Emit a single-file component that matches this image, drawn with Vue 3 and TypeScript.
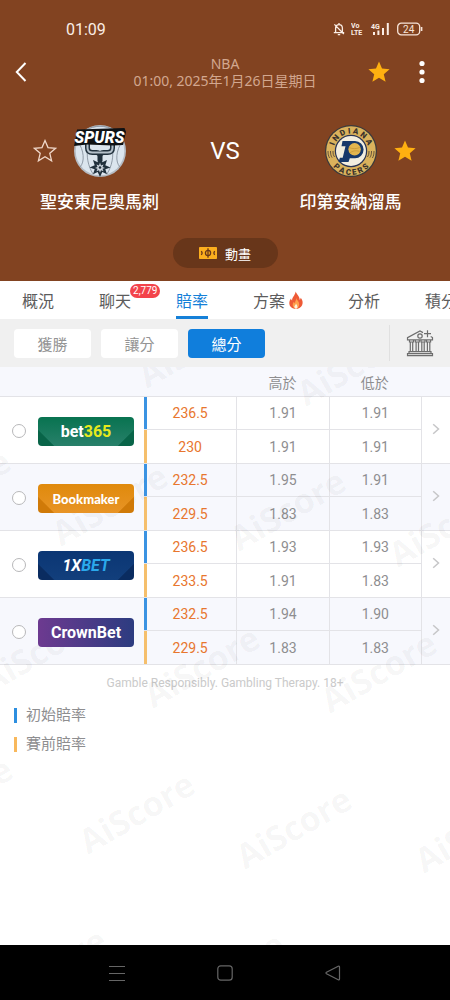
<script setup lang="ts">
import { ref } from 'vue'

interface OddsLine {
  total: string
  over: string
  under: string
}

interface Bookmaker {
  id: string
  name: [string, string]
  open: OddsLine
  close: OddsLine
}

const bookmakers: Bookmaker[] = [
  {
    id: 'bet365',
    name: ['bet', '365'],
    open: { total: '236.5', over: '1.91', under: '1.91' },
    close: { total: '230', over: '1.91', under: '1.91' },
  },
  {
    id: 'bookmaker',
    name: ['Bookmaker', ''],
    open: { total: '232.5', over: '1.95', under: '1.91' },
    close: { total: '229.5', over: '1.83', under: '1.83' },
  },
  {
    id: 'onexbet',
    name: ['1X', 'BET'],
    open: { total: '236.5', over: '1.93', under: '1.93' },
    close: { total: '233.5', over: '1.91', under: '1.83' },
  },
  {
    id: 'crownbet',
    name: ['CrownBet', ''],
    open: { total: '232.5', over: '1.94', under: '1.90' },
    close: { total: '229.5', over: '1.83', under: '1.83' },
  },
]

const tabs = [
  { label: '概況' },
  { label: '聊天', count: '2,779' },
  { label: '賠率' },
  { label: '方案', hot: true },
  { label: '分析' },
  { label: '積分' },
]
const markets = ['獲勝', '讓分', '總分']

const activeTab = ref('賠率')
const activeMarket = ref('總分')
const chosen = ref('')

const marks = [
  [147, 22], [306, 40], [-96, 165], [61, 180], [239, 185], [398, 201],
  [-10, 327], [153, 342], [330, 347], [-94, 473], [88, 488], [245, 503],
  [424, 507], [0, 644], [178, 648],
]

const starPath = 'M12 1.6l3 7 7.6.7-5.8 5 1.8 7.5L12 17.8l-6.600 4 1.800-7.500-5.800-5 7.600-.7z'
</script>

<template>
  <div class="page">
    <header class="hero">
      <div class="status">
        <span class="clock">01:09</span>
        <div class="status-icons">
          <svg width="12" height="14" viewBox="0 0 12 14" fill="none" stroke="#fbeee6" stroke-width="1.3">
            <path d="M2.6 10.4V6.2C2.6 4 4 2.6 6 2.6s3.4 1.4 3.4 3.6v4.2M.8 10.6h10.4M6 1v1.6M4.8 12.6h2.4M1.4 2.4l9.4 9.6" />
          </svg>
          <svg class="volte" width="12" height="14" viewBox="0 0 12 14" fill="#fbeee6">
            <text x="0" y="6">Vo</text>
            <text x="0" y="13">LTE</text>
          </svg>
          <svg class="signal" width="22" height="14" viewBox="0 0 22 14" fill="#fbeee6">
            <text x="2" y="6.5">4G</text>
            <path d="M4 10h2v3H4zM8.400 8.600h2V13h-2zM13 6h2v7h-2zM17.800 1h2v12h-2z" />
          </svg>
          <svg class="battery" width="26" height="14" viewBox="0 0 26 14" fill="none" stroke="#f7e4d8">
            <rect x="0.700" y="1.200" width="22" height="11.600" rx="3.600" stroke-width="1.300" />
            <path d="M24.600 5v4" stroke-width="1.600" />
            <text x="11.700" y="10.500" text-anchor="middle">24</text>
          </svg>
        </div>
      </div>

      <div class="bar">
        <button class="icon-btn back" aria-label="返回">
          <svg width="12" height="22" viewBox="0 0 12 22" fill="none" stroke="#fff" stroke-width="2">
            <path d="M10.500 2L1.800 11l8.700 9" />
          </svg>
        </button>
        <div class="title">
          <div>NBA</div>
          <div>01:00, 2025年1月26日星期日</div>
        </div>
        <div class="actions">
          <button class="icon-btn" aria-label="收藏比賽">
            <svg width="24" height="24" viewBox="0 0 24 24" fill="#ffb010"><path :d="starPath" /></svg>
          </button>
          <button class="icon-btn" aria-label="更多">
            <svg width="8" height="24" viewBox="0 0 8 24" fill="#fff">
              <circle cx="4" cy="3.500" r="2.600" /><circle cx="4" cy="12" r="2.600" /><circle cx="4" cy="20.500" r="2.600" />
            </svg>
          </button>
        </div>
      </div>

      <div class="match">
        <div class="team">
          <div class="crest">
            <button class="icon-btn side-left" aria-label="收藏聖安東尼奧馬刺">
              <svg width="24" height="24" viewBox="0 0 24 24" fill="none" stroke="#f0d8ca" stroke-width="1.300"><path :d="starPath" /></svg>
            </button>
            <svg class="spurs" width="54" height="54" viewBox="0 0 54 54">
              <circle cx="27" cy="27" r="26" fill="#b4bbc3" />
              <circle cx="27" cy="27" r="24.300" fill="#dbe5ee" />
              <g fill="none" stroke="#8f9aa6" stroke-width="1">
                <path d="M5 18c6 8 7 20 2 25M49 18c-6 8-7 20-2 25M15 22c-2 10 0 20 5 28M39 22c2 10 0 20-5 28" />
                <path d="M13 6c8-5 20-5 28 0" />
              </g>
              <path d="M14.500 19v5c0 3 2 4.500 5 4.500h4c2.500 0 3.500 1.500 3.500 4v5-5c0-2.500 1-4 3.500-4h4c3 0 5-1.500 5-4.500v-5" fill="none" stroke="#20303c" stroke-width="5" />
              <path d="M14.500 19v5c0 3 2 4.500 5 4.500h15c3 0 5-1.500 5-4.500v-5" fill="none" stroke="#b4c0ca" stroke-width="2" />
              <path d="M27 33l2.300 5.200 4.700-2.200-1.700 5.200 5.200 2.300-5.200 1.700 1.700 5-4.700-2.300L27 53l-2.300-5.100-4.700 2.300 1.700-5-5.200-1.700 5.200-2.300L20 36l4.700 2.200z" fill="#20303c" />
              <path d="M27 38.500l1 3 2.500-1-1 2.500 2.500 1-2.500.8 1 2.400-2.500-1-1 2.600-1-2.600-2.500 1 1-2.400-2.500-.8 2.500-1-1-2.500 2.500 1z" fill="#cbd3db" />
              <circle cx="27" cy="43.500" r="1.300" fill="#20303c" />
              <path d="M4 5.500l47.500-1.500 1.500 4-3 13-10 .500-26-1-13 1.500 1.500-7z" fill="#0e1114" />
              <text x="26.500" y="19" text-anchor="middle">SPURS</text>
            </svg>
          </div>
          <div class="team-name">聖安東尼奧馬刺</div>
        </div>
        <div class="versus">VS</div>
        <div class="team">
          <div class="crest">
            <svg class="pacers" width="54" height="54" viewBox="0 0 54 54">
              <defs>
                <path id="arc-top" d="M9.500 29a17.600 17.600 0 1 1 35 0" />
                <path id="arc-bottom" d="M3.300 25a23.800 23.800 0 1 0 47.400 0" />
              </defs>
              <circle cx="27" cy="27" r="26" fill="#3b3a3c" />
              <circle cx="27" cy="27" r="24.800" fill="#dab25c" />
              <g fill="none" stroke="#5a4a38" stroke-width="0.900">
                <path d="M4 27c0 3 .4 5 1.600 7M6.500 27c0 3 .4 5 1.600 6.600M9 27c0 3 .4 4.500 1.600 6M50 27c0 3-.4 5-1.600 7M47.500 27c0 3-.4 5-1.600 6.600M45 27c0 3-.4 4.500-1.600 6" />
              </g>
              <text><textPath href="#arc-top" startOffset="50%" text-anchor="middle">I N D I A N A</textPath></text>
              <text><textPath href="#arc-bottom" startOffset="50%" text-anchor="middle">P A C E R S</textPath></text>
              <circle cx="27" cy="27" r="16.200" fill="#2a3454" />
              <circle cx="27" cy="27" r="15" fill="#f3eedf" />
              <path d="M18.500 17H31a8.600 8.600 0 0 1 0 17.200h-5.200L24.500 38H14.500l1.400-4.300h2.800l2.800-11.400h-4z" fill="#17386a" />
              <circle cx="30.600" cy="25.300" r="6.200" fill="#e4b64e" />
              <path d="M25 23.500c3 1.500 7.500 1.500 10.800 0M26 29c2-2 6-3 9.500-1.500" fill="none" stroke="#c08f34" stroke-width="0.600" />
            </svg>
            <button class="icon-btn side-right" aria-label="收藏印第安納溜馬">
              <svg width="24" height="24" viewBox="0 0 24 24" fill="#ffb010"><path :d="starPath" /></svg>
            </button>
          </div>
          <div class="team-name">印第安納溜馬</div>
        </div>
      </div>

      <button class="animation">
        <svg width="18" height="12" viewBox="0 0 18 12">
          <rect width="18" height="12" rx="0.800" fill="#fcae1e" />
          <g fill="none" stroke="#6a3719" stroke-width="1.300">
            <circle cx="9" cy="6" r="2.600" />
            <path d="M9 1.200v9.600M2 4.300c1.500.5 1.500 2.900 0 3.400M16 4.300c-1.500.5-1.500 2.900 0 3.400" />
          </g>
        </svg>
        動畫
      </button>
    </header>

    <nav class="tabs" aria-label="賽事分頁">
      <button
        v-for="tab in tabs"
        :key="tab.label"
        class="tab"
        :class="{ active: tab.label === activeTab }"
        @click="activeTab = tab.label"
      >
        {{ tab.label }}
        <span v-if="tab.count" class="count">{{ tab.count }}</span>
        <svg v-if="tab.hot" width="14" height="18" viewBox="0 0 14 18">
          <path d="M6.600.5c1 3 4.300 4.700 4 8.300.7-.4 1-1.200 1-2 1.600 1.600 2.200 3.600 2 5.500-.3 2.800-2.200 4.800-5 5.400H5.200C2.200 17 .3 15 .3 12.200c0-2 .8-3.200 1.700-4.600.1 1 .5 1.700 1.100 2C2.900 6 6.200 4.500 6.600.5z" fill="#ee5a36" />
          <path d="M7.300 7c.3 2 2.900 3.400 2.900 6.200 0 2.400-1.400 4-3.200 4.500-2-.5-3.300-2-3.300-4 0-1.500.7-2.300 1.300-3 .1.800.5 1.300 1 1.500C5.900 10.300 7.400 9 7.300 7z" fill="#ffa04c" />
          <path d="M7 12.500c.2 1.200 1.600 1.900 1.500 3.400-.1 1-.7 1.600-1.500 1.900-1-.3-1.600-1-1.600-2 0-1.400 1.400-1.900 1.600-3.300z" fill="#fff1dc" />
        </svg>
      </button>
    </nav>

    <div class="filters">
      <button
        v-for="market in markets"
        :key="market"
        class="market"
        :class="{ active: market === activeMarket }"
        @click="activeMarket = market"
      >
        {{ market }}
      </button>
      <button class="icon-btn house" aria-label="博彩公司">
        <svg width="28" height="28" viewBox="0 0 28 28" fill="none" stroke="#6d6d6d" stroke-width="1.200">
          <path d="M17 3.600L14 2 1.500 8.600v2.200h25V8.600l-1.800-1" />
          <circle cx="14" cy="7" r="2.200" />
          <path d="M21.500 1.200v7M18 4.700h7" />
          <path d="M3.500 11v2h4v-2M9.300 11v2h4v-2M15 11v2h4v-2M20.600 11v2h4v-2M4.300 13v9.500M6.700 13v9.500M10.100 13v9.500M12.500 13v9.500M15.800 13v9.500M18.200 13v9.500M21.400 13v9.500M23.800 13v9.500" />
          <path d="M3 22.700h22v1.900H3zM1.500 24.700h25v2h-25z" />
        </svg>
      </button>
    </div>

    <main class="content">
      <table class="odds">
        <colgroup>
          <col class="col-brand" />
          <col />
          <col />
          <col />
          <col class="col-go" />
        </colgroup>
        <thead>
          <tr>
            <th></th>
            <th></th>
            <th>高於</th>
            <th>低於</th>
            <th></th>
          </tr>
        </thead>
        <tbody v-for="item in bookmakers" :key="item.id">
          <tr>
            <td rowspan="2" class="brand-cell">
              <label class="brand">
                <input v-model="chosen" type="radio" name="bookmaker" :value="item.id" />
                <span class="badge" :class="item.id">
                  <span>{{ item.name[0] }}</span><span class="accent">{{ item.name[1] }}</span>
                </span>
              </label>
            </td>
            <td class="total open">{{ item.open.total }}</td>
            <td class="price">{{ item.open.over }}</td>
            <td class="price">{{ item.open.under }}</td>
            <td rowspan="2" class="go-cell">
              <button class="icon-btn go" :aria-label="item.name.join('')">
                <svg width="8" height="12" viewBox="0 0 8 12" fill="none" stroke="#c6c6c8" stroke-width="1.500">
                  <path d="M1.200 1.200L6.500 6l-5.300 4.800" />
                </svg>
              </button>
            </td>
          </tr>
          <tr>
            <td class="total close">{{ item.close.total }}</td>
            <td class="price">{{ item.close.over }}</td>
            <td class="price">{{ item.close.under }}</td>
          </tr>
        </tbody>
      </table>

      <p class="notice">Gamble Responsibly. Gambling Therapy. 18+</p>

      <ul class="legend">
        <li class="first">初始賠率</li>
        <li class="last">賽前賠率</li>
      </ul>

      <svg class="watermark" aria-hidden="true">
        <text v-for="([x, y], i) in marks" :key="i" :transform="`translate(${x} ${y}) rotate(-30)`">AiScore</text>
      </svg>
    </main>

    <footer class="system">
      <button class="icon-btn" aria-label="最近">
        <svg width="16" height="16" viewBox="0 0 16 16" fill="none" stroke="#666"><path d="M0 1.500h16M0 8.500h16M0 15.500h16" /></svg>
      </button>
      <button class="icon-btn" aria-label="主頁">
        <svg width="16" height="16" viewBox="0 0 16 16" fill="none" stroke="#666" stroke-width="1.200"><rect x="0.800" y="0.800" width="14.400" height="14.400" rx="3" /></svg>
      </button>
      <button class="icon-btn" aria-label="上一頁">
        <svg width="16" height="16" viewBox="0 0 16 16" fill="none" stroke="#666" stroke-width="1.200"><path d="M13.200 1.300L1.500 7.300q-1 .7 0 1.400l11.700 6q1.300.5 1.300-1V2.300q0-1.500-1.300-1z" /></svg>
      </button>
    </footer>
  </div>
</template>

<style>
body {
  background: #fff;
}
</style>

<style scoped>
.page {
  display: flex;
  flex-direction: column;
  min-height: 100vh;
  font-family: Roboto, "Noto Sans CJK TC", sans-serif;
  font-size: 14px;
  color: #8e8e90;
}

button {
  font: inherit;
  color: inherit;
  border: 0;
  padding: 0;
  background: none;
  cursor: pointer;
}

.icon-btn {
  display: inline-flex;
  align-items: center;
  justify-content: center;
}

.hero {
  display: flex;
  flex-direction: column;
  padding-bottom: 13px;
  background: #824321;
}

.status {
  display: flex;
  justify-content: space-between;
  align-items: center;
  height: 20px;
  padding: 19px 27px 0 66px;
}

.clock {
  font-size: 16px;
  color: #fbeee6;
}

.status-icons {
  display: flex;
  align-items: center;
  gap: 6px;
}

.volte text {
  font: 700 7px Roboto, sans-serif;
}

.signal text {
  font: 700 7px Roboto, sans-serif;
}

.battery text {
  font: 10px Roboto, sans-serif;
  fill: #f7e4d8;
  stroke: none;
}

.bar {
  display: grid;
  grid-template-columns: 1fr auto 1fr;
  align-items: center;
  margin-top: 16px;
}

.back {
  justify-self: start;
  margin-left: 15px;
}

.title {
  font-family: "Noto Sans", "Noto Sans CJK TC", sans-serif;
  line-height: 17px;
  text-align: center;
  color: #d2a78f;
}

.actions {
  display: flex;
  justify-content: flex-end;
  align-items: center;
  gap: 27px;
  padding-right: 24px;
}

.match {
  display: grid;
  grid-template-columns: 1fr 52px 1fr;
  margin-top: 35px;
  color: #fff;
}

.crest {
  display: grid;
  grid-template-columns: 1fr 54px 1fr;
  align-items: center;
}

.side-left {
  justify-self: end;
  margin-right: 16px;
}

.side-right {
  justify-self: start;
  margin-left: 15px;
}

.crest > .pacers {
  grid-column: 2;
}

.spurs text {
  font: italic 900 16px Roboto, sans-serif;
  fill: #fff;
}

.pacers text {
  font: 900 8px Roboto, sans-serif;
  fill: #3a332c;
}

.team-name {
  margin-top: 12px;
  font-size: 17px;
  font-weight: 500;
  line-height: 24px;
  text-align: center;
}

.versus {
  height: 54px;
  font-size: 24px;
  line-height: 54px;
  text-align: center;
}

.animation {
  display: flex;
  align-items: center;
  justify-content: center;
  gap: 8px;
  align-self: center;
  width: 105px;
  height: 30px;
  margin-top: 24px;
  border-radius: 15px;
  background: #68361a;
  color: #fff;
  font-size: 13px;
}

.tabs {
  display: flex;
  gap: 45px;
  height: 38px;
  padding-left: 22px;
  overflow: hidden;
  background: #fff;
}

.tab {
  position: relative;
  display: flex;
  flex: none;
  align-items: center;
  gap: 4px;
  font-size: 16px;
  color: #5c5c5c;
}

.tab.active {
  color: #1580d8;
  box-shadow: inset 0 -3px #1580d8;
}

.count {
  position: absolute;
  left: 31px;
  top: 3px;
  padding: 0 3px;
  border-radius: 7px;
  background: #f3434b;
  color: #fff;
  font-size: 10px;
  line-height: 14px;
}

.filters {
  display: flex;
  align-items: center;
  gap: 10px;
  height: 48px;
  padding-left: 14px;
  background: #f0f0f0;
}

.market {
  width: 77px;
  height: 29px;
  border-radius: 4px;
  background: #fff;
  font-size: 15px;
  color: #949494;
}

.market.active {
  background: #107edc;
  color: #fff;
}

.house {
  width: 61px;
  height: 36px;
  margin-left: auto;
  border-left: 1px solid #e0e0e0;
}

.content {
  position: relative;
  flex: 1;
  overflow: hidden;
}

.odds {
  width: 100%;
  table-layout: fixed;
  border-collapse: separate;
  border-spacing: 0;
}

.col-brand {
  width: 144px;
}

.col-go {
  width: 29px;
}

.odds th {
  height: 29px;
  padding: 0;
  border-bottom: 1px solid #e3e3e7;
  background: #f7f8fd;
  font-size: 14px;
  font-weight: 400;
}

.odds td {
  padding: 0;
  border-bottom: 1px solid #e3e3e7;
  text-align: center;
}

.odds tbody:nth-of-type(even) td {
  background: #f7f8fd;
}

.odds tr:first-child td {
  height: 32px;
}

.odds tr:last-child td {
  height: 33px;
}

.total {
  color: #e8762e;
}

.total.open {
  box-shadow: inset 3px 0 #3b93e2;
}

.total.close {
  box-shadow: inset 3px 0 #f5bf6c;
}

.odds .price,
.odds .go-cell {
  border-left: 1px solid #e3e3e7;
}

.odds .brand-cell {
  padding-top: 2px;
}

.brand {
  display: flex;
  align-items: center;
  gap: 12px;
  padding-left: 12px;
}

.brand input {
  appearance: none;
  flex: none;
  width: 14px;
  height: 14px;
  margin: 0;
  border: 1px solid #b8b8ba;
  border-radius: 50%;
  background: #fff;
}

.brand input:checked {
  border: 4px solid #107edc;
}

.badge {
  position: relative;
  z-index: 2;
  width: 96px;
  height: 29px;
  border-radius: 4px;
  color: #fff;
  font-size: 15px;
  font-weight: 700;
  line-height: 30px;
}

.bet365 {
  background:
    linear-gradient(45deg, #086448 11px, transparent 12px),
    linear-gradient(-45deg, #086448 11px, transparent 12px),
    linear-gradient(#087350, #28806a);
  font-size: 16px;
}

.bet365 .accent {
  color: #e8ea1c;
}

.bookmaker {
  background:
    linear-gradient(45deg, #d07a08 11px, transparent 12px),
    linear-gradient(-45deg, #d07a08 11px, transparent 12px),
    linear-gradient(#e08a0c, #e89426);
  font-family: Lato, sans-serif;
  font-size: 13px;
  font-weight: 900;
}

.onexbet {
  background:
    linear-gradient(45deg, #0a2c60 11px, transparent 12px),
    linear-gradient(-45deg, #0a2c60 11px, transparent 12px),
    linear-gradient(#0b3674, #123f7c);
  font-size: 16px;
  font-style: italic;
}

.onexbet .accent {
  color: #2ba9ec;
}

.crownbet {
  background: linear-gradient(90deg, #6d3a90, #2c3c80);
  font-size: 16px;
}

.go {
  width: 100%;
}

.notice {
  margin: 10px 0 0;
  font-size: 12px;
  line-height: 16px;
  text-align: center;
  color: #cacaca;
}

.legend {
  display: flex;
  flex-direction: column;
  gap: 14px;
  margin: 17px 0 0;
  padding: 0 0 0 14px;
  list-style: none;
  font-size: 15px;
  line-height: 15px;
}

.legend li {
  padding-left: 9px;
  border-left: 3px solid #2d8fe0;
}

.legend .last {
  border-color: #f8b85c;
}

.watermark {
  position: absolute;
  inset: 0;
  width: 100%;
  height: 100%;
  pointer-events: none;
}

.watermark text {
  font: 700 34px "Open Sans", sans-serif;
  fill: #000;
  fill-opacity: 0.045;
}

.system {
  display: flex;
  justify-content: center;
  gap: 92px;
  height: 55px;
  background: #000;
}
</style>
